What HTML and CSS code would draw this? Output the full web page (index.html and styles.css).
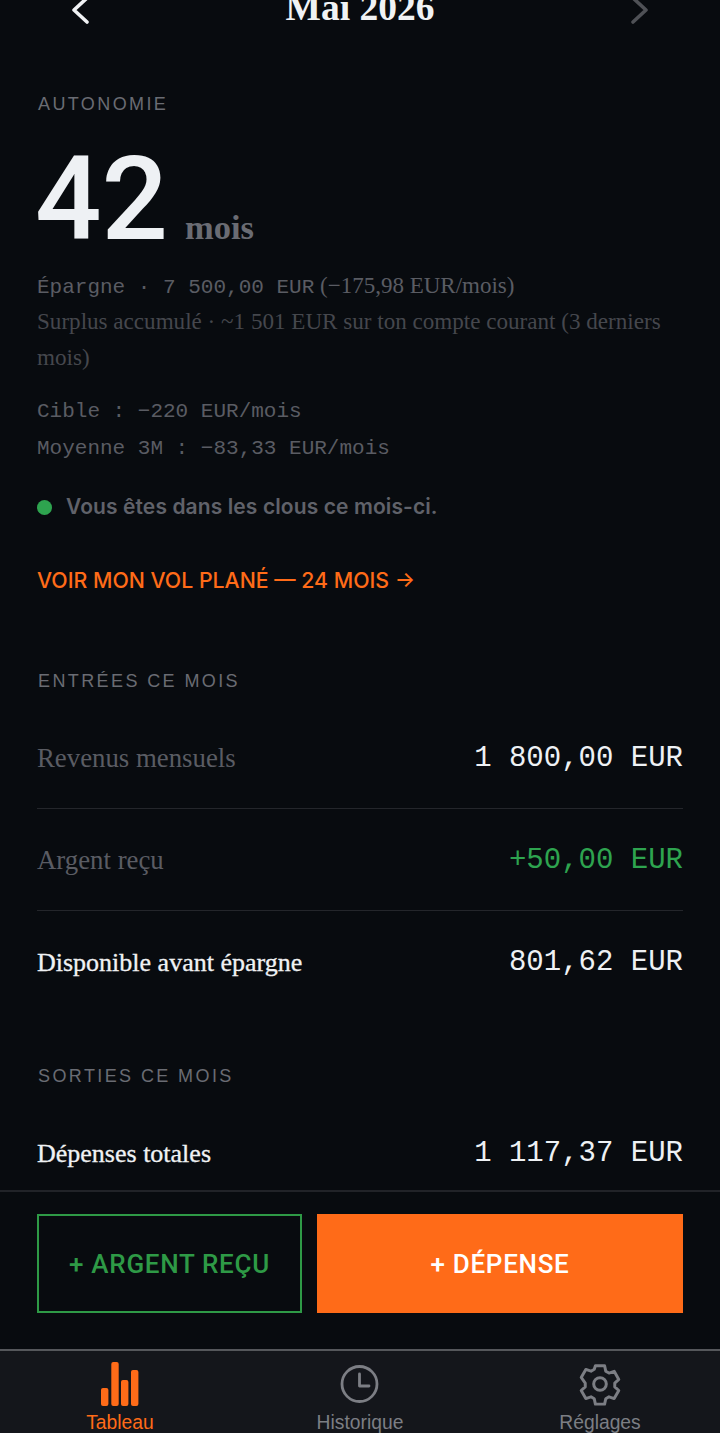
FILE: index.html
```html
<!DOCTYPE html>
<html lang="fr">
<head>
<meta charset="utf-8">
<title>Tableau</title>
<link rel="stylesheet" href="styles.css">
</head>
<body>
<div class="app">
  <main class="scroll">
    <header class="month">
      <svg class="chev" width="24" height="30" viewBox="0 0 24 30"><path d="M20 3 L7 15 L20 27" fill="none" stroke="#f0f2f4" stroke-width="3.6" stroke-linecap="round" stroke-linejoin="round"/></svg>
      <h1>Mai 2026</h1>
      <svg class="chev" width="24" height="30" viewBox="0 0 24 30"><path d="M4 3 L17 15 L4 27" fill="none" stroke="#4f5156" stroke-width="3.6" stroke-linecap="round" stroke-linejoin="round"/></svg>
    </header>

    <section class="auto">
      <h2 class="eyebrow">AUTONOMIE</h2>
      <div class="hero"><span class="num">42</span><span class="unit">mois</span></div>
      <p class="line"><span class="mono">Épargne · 7 500,00 EUR</span> (−175,98 EUR/mois)</p>
      <p class="note">Surplus accumulé · ~1 501 EUR sur ton compte courant (3 derniers mois)</p>
      <p class="mono stat gap">Cible : −220 EUR/mois</p>
      <p class="mono stat">Moyenne 3M : −83,33 EUR/mois</p>
      <p class="status"><span class="dot"></span>Vous êtes dans les clous ce mois-ci.</p>
      <a class="link">VOIR MON VOL PLANÉ — 24 MOIS →</a>
    </section>

    <section class="in">
      <h2 class="eyebrow">ENTRÉES CE MOIS</h2>
      <div class="rows">
        <div class="row ruled"><span class="lab">Revenus mensuels</span><span class="amt">1 800,00 EUR</span></div>
        <div class="row ruled"><span class="lab">Argent reçu</span><span class="amt green">+50,00 EUR</span></div>
        <div class="row"><span class="lab strong">Disponible avant épargne</span><span class="amt">801,62 EUR</span></div>
      </div>
    </section>

    <section class="out">
      <h2 class="eyebrow">SORTIES CE MOIS</h2>
      <div class="rows">
        <div class="row"><span class="lab strong">Dépenses totales</span><span class="amt">1 117,37 EUR</span></div>
      </div>
    </section>
  </main>

  <div class="actions">
    <button class="btn ghost">+ ARGENT REÇU</button>
    <button class="btn solid">+ DÉPENSE</button>
  </div>

  <nav class="tabs">
    <div class="tab active">
      <svg width="46" height="46" viewBox="0 0 46 46"><g fill="#ff6b18"><rect x="4" y="27" width="7.4" height="18" rx="2"/><rect x="14.3" y="1" width="7.4" height="44" rx="2"/><rect x="24" y="19" width="7.4" height="26" rx="2"/><rect x="34" y="9" width="7.4" height="36" rx="2"/></g></svg>
      <span>Tableau</span>
    </div>
    <div class="tab">
      <svg width="46" height="46" viewBox="0 0 46 46"><circle cx="22.5" cy="23" r="17.5" fill="none" stroke="#7c7e84" stroke-width="2.8"/><path d="M22.5 13 V25 H32" fill="none" stroke="#7c7e84" stroke-width="2.8" stroke-linecap="round" stroke-linejoin="round"/></svg>
      <span>Historique</span>
    </div>
    <div class="tab">
      <svg width="46" height="46" viewBox="0 0 24 24"><g fill="none" stroke="#7c7e84" stroke-width="1.55" stroke-linecap="round" stroke-linejoin="round"><path d="M9.6 2.5h4.8l.6 2.8 1.7 1 2.7-.9 2.4 4.2-2.1 1.9v2l2.1 1.9-2.4 4.2-2.7-.9-1.7 1-.6 2.8H9.6L9 19.7l-1.7-1-2.7.9-2.4-4.2 2.1-1.9v-2L2.2 8.6l2.4-4.2 2.7.9 1.7-1z"/><circle cx="12" cy="12" r="3.3"/></g></svg>
      <span>Réglages</span>
    </div>
  </nav>
</div>
</body>
</html>
```
FILE: styles.css
```css
* { box-sizing: border-box; margin: 0; padding: 0; }
html, body { height: 100%; background: #080b0f; }
body { overflow: hidden; font-family: "Liberation Serif", serif; }
.app { width: 720px; height: 1433px; display: flex; flex-direction: column; overflow: hidden; }
.scroll { flex: 0 0 1190px; overflow: hidden; padding: 0 37px; }
.month { display: flex; align-items: center; justify-content: space-between; margin: -8px 30px 0 30px; height: 36px; }
.month h1 { font: 700 37.5px/36px "Liberation Serif", serif; color: #f0f2f4; margin-bottom: 4px; }
.chev { display: block; }
.eyebrow { font: 400 18px/24px "Liberation Sans", sans-serif; letter-spacing: 2.4px; color: #6a6c73; padding-left: 1px; }
.auto { margin-top: 64px; }
.hero { display: flex; align-items: baseline; margin-top: 27px; margin-bottom: 13px; height: 112px; }
.num { font: 500 117px/112px Roboto, sans-serif; color: #eef1f4; margin-left: -2px; }
.unit { font: 700 34.5px/40px "Liberation Serif", serif; color: #6a6c73; margin-left: 17px; }
.mono { font-family: "Liberation Mono", monospace; }
.line { font-size: 23px; line-height: 36px; height: 36px; color: #5a5c63; }
.line .mono { font-size: 21px; }
.note { font-size: 23.1px; line-height: 35.5px; color: #45474d; }
.stat { font-size: 21px; line-height: 37px; color: #5a5c63; }
.gap { margin-top: 18px; }
.status { display: flex; align-items: center; font: 600 21px/30px Inter, sans-serif; letter-spacing: .1px; color: #60626a; margin-top: 25px; }
.dot { width: 15px; height: 15px; border-radius: 50%; background: #2ea44f; margin-right: 14px; }
.link { display: block; font: 500 21.3px/28px Inter, sans-serif; color: #ff6b18; margin-top: 44px; }
.in { margin-top: 75px; }
.out { margin-top: 51px; }
.rows { margin-top: 14px; }
.row { display: flex; align-items: center; justify-content: space-between; height: 102px; padding-top: 2px; }
.ruled { border-bottom: 1px solid #24262b; }
.lab { font-size: 26.8px; color: #5a5c63; }
.strong { font-size: 26px; color: #f0f2f4; -webkit-text-stroke: .3px #f0f2f4; }
.amt { font: 400 29px/34px "Liberation Mono", monospace; color: #eef1f4; }
.green { color: #2ea44f; }
.actions { flex: 0 0 159px; border-top: 2px solid #212328; display: flex; gap: 15px; padding: 22px 37px 0; }
.btn { height: 99px; font: 500 26px/30px Roboto, sans-serif; letter-spacing: .7px; border-radius: 0; }
.ghost { width: 265px; background: transparent; border: 2px solid #2e9a46; color: #2e9a46; }
.solid { flex: 1; background: #ff6b18; border: 0; color: #fff; }
.tabs { flex: 1; display: flex; background: #14161b; border-top: 2px solid #55575b; }
.tab { flex: 1; display: flex; flex-direction: column; align-items: center; padding-top: 10px; font: 400 19.3px/24px "Liberation Sans", sans-serif; color: #7c7e84; }
.tab svg { display: block; }
.tab span { margin-top: 4px; }
.active { color: #ff6b18; }
```
